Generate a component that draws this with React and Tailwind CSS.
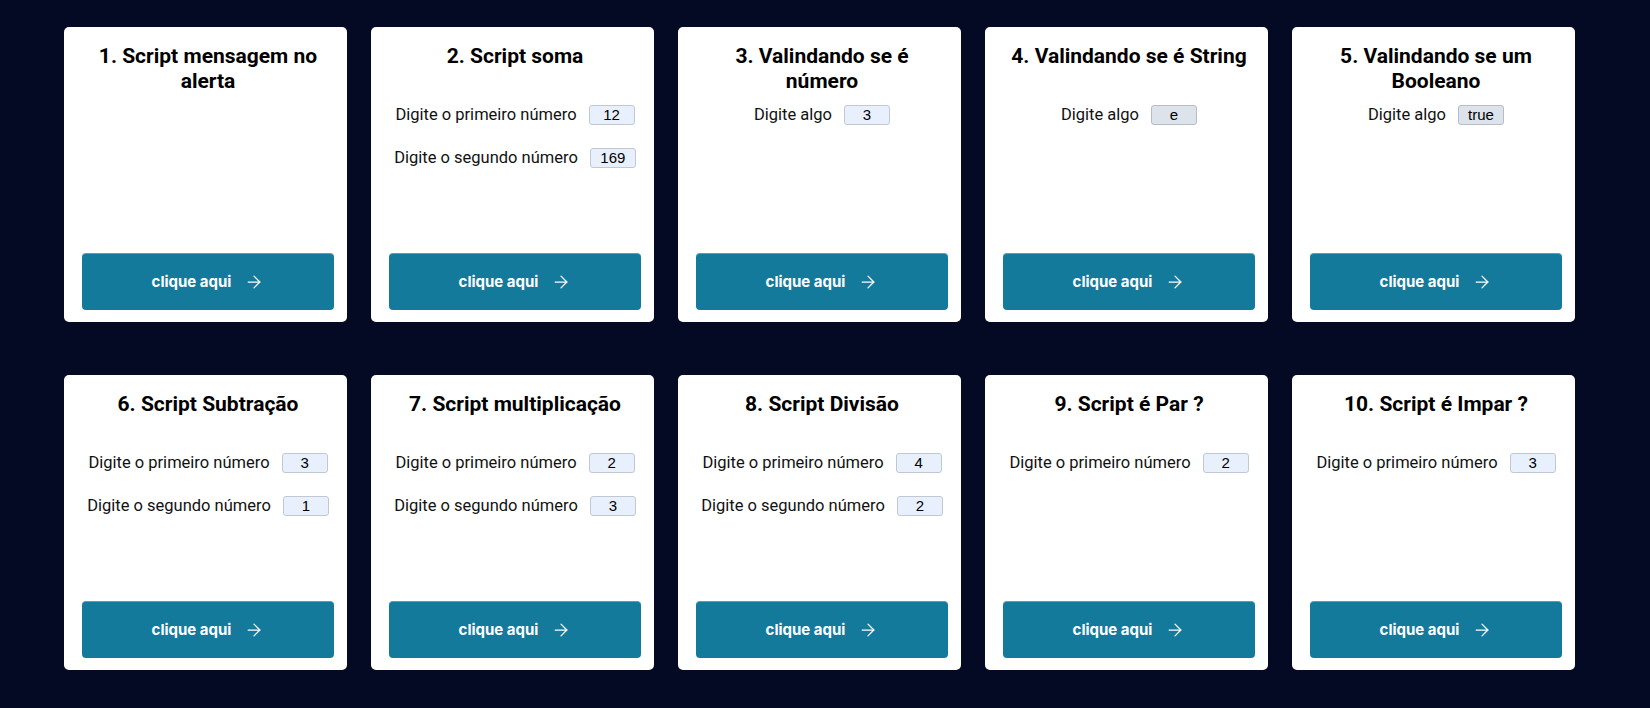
import { ArrowRight } from 'lucide-react';

const cards = [
  { title: '1. Script mensagem no\nalerta', rows: [] },
  {
    title: '2. Script soma',
    rows: [
      { label: 'Digite o primeiro número', value: '12' },
      { label: 'Digite o segundo número', value: '169' },
    ],
  },
  { title: '3. Valindando se é\nnúmero', rows: [{ label: 'Digite algo', value: '3' }] },
  { title: '4. Valindando se é String', rows: [{ label: 'Digite algo', value: 'e', plain: true }] },
  { title: '5. Valindando se um\nBooleano', rows: [{ label: 'Digite algo', value: 'true', plain: true }] },
  {
    title: '6. Script Subtração',
    rows: [
      { label: 'Digite o primeiro número', value: '3' },
      { label: 'Digite o segundo número', value: '1' },
    ],
  },
  {
    title: '7. Script multiplicação',
    rows: [
      { label: 'Digite o primeiro número', value: '2' },
      { label: 'Digite o segundo número', value: '3' },
    ],
  },
  {
    title: '8. Script Divisão',
    rows: [
      { label: 'Digite o primeiro número', value: '4' },
      { label: 'Digite o segundo número', value: '2' },
    ],
  },
  { title: '9. Script é Par ?', rows: [{ label: 'Digite o primeiro número', value: '2' }] },
  { title: '10. Script é Impar ?', rows: [{ label: 'Digite o primeiro número', value: '3' }] },
];

function Card({ title, rows }) {
  return (
    <div className="bg-white rounded-[5px] h-[295px] flex flex-col pt-[17px] pb-[12px] pl-[18px] pr-[13px]">
      <h2 className="h-[60px] text-[21px] leading-[25px] font-bold text-center text-black whitespace-pre-line">
        {title}
      </h2>
      <div className="flex flex-col gap-[21px]">
        {rows.map((row) => (
          <div key={row.label} className="h-[22px] flex items-center justify-center gap-[12px]">
            <span className="text-[16.5px] text-[#111]">{row.label}</span>
            <input
              readOnly
              defaultValue={row.value}
              className={`w-[46px] h-[20px] rounded-[3px] border text-center text-[15px] text-black outline-none font-['Liberation_Sans',Arial,sans-serif] ${
                row.plain ? 'bg-[#dde3ea] border-[#b7bdc6]' : 'bg-[#e8f0fe] border-[#c2c8d3]'
              }`}
            />
          </div>
        ))}
      </div>
      <button className="mt-auto h-[57px] w-full rounded-[4px] bg-[#137a9c] border-t border-[#5a9fb8] flex items-center justify-center gap-[13px] text-white text-[15px] font-bold font-['Inter',sans-serif]">
        clique aqui
        <ArrowRight size={20} strokeWidth={1.5} />
      </button>
    </div>
  );
}

export default function App() {
  return (
    <div className="min-h-[708px] bg-[#050a24] pt-[27px] pl-[64px] font-['Roboto',sans-serif]">
      <div className="grid grid-cols-[repeat(5,283px)] gap-x-[24px] gap-y-[53px]">
        {cards.map((card) => (
          <Card key={card.title} {...card} />
        ))}
      </div>
    </div>
  );
}
